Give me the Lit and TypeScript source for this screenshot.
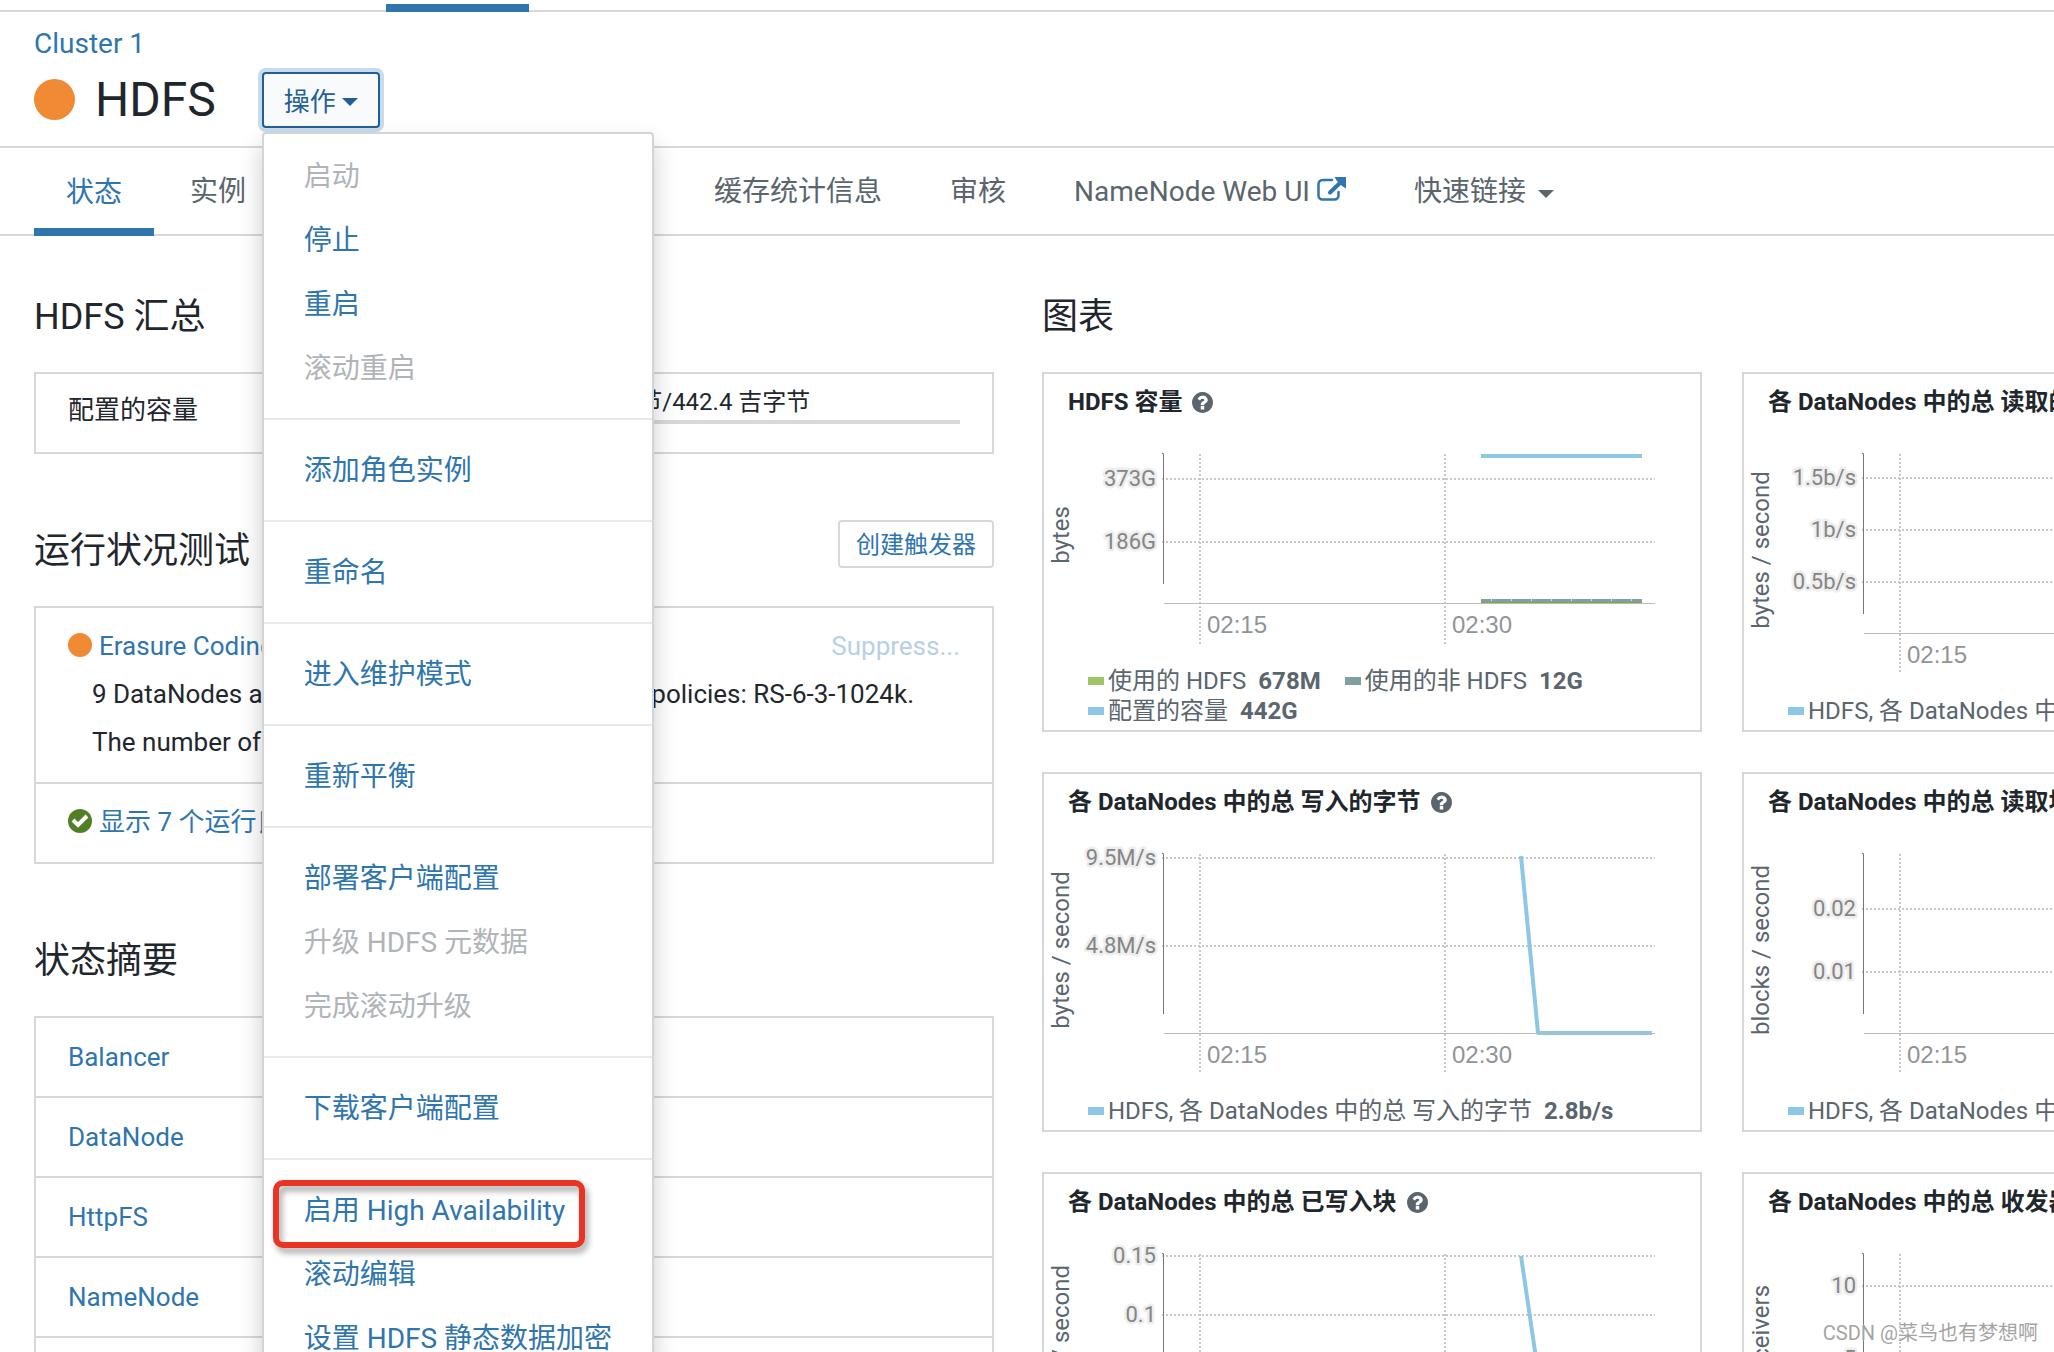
import { LitElement, html, svg, css, nothing } from "lit";
import { customElement, property } from "lit/decorators.js";
import { classMap } from "lit/directives/class-map.js";

interface Tick {
  y: number;
  label: string;
}

interface Legend {
  color: string;
  name: string;
  value?: string;
}

interface Series {
  color: string;
  points: string;
  width: number;
  dash?: string;
}

interface Chart {
  title: string;
  unit: string;
  rows: number;
  ticks: Tick[];
  series: Series[];
  legend: Legend[];
}

const BLUE = "#8cc8e6";

const CHARTS: Chart[] = [
  {
    title: "HDFS 容量",
    unit: "bytes",
    rows: 2,
    ticks: [
      { y: 51, label: "373G" },
      { y: 114, label: "186G" },
    ],
    series: [
      { color: BLUE, points: "437,28 598,28", width: 4 },
      { color: "#829fa0", points: "437,173 598,173", width: 4 },
      { color: "#d5e6e6", points: "447,172 598,172", width: 2, dash: "1 19" },
      { color: "#7ea64e", points: "437,175 598,175", width: 2 },
    ],
    legend: [
      { color: "#9fc367", name: "使用的 HDFS", value: "678M" },
      { color: "#829fa0", name: "使用的非 HDFS", value: "12G" },
      { color: BLUE, name: "配置的容量", value: "442G" },
    ],
  },
  {
    title: "各 DataNodes 中的总 读取的字节",
    unit: "bytes / second",
    rows: 1,
    ticks: [
      { y: 50, label: "1.5b/s" },
      { y: 102, label: "1b/s" },
      { y: 154, label: "0.5b/s" },
    ],
    series: [],
    legend: [{ color: BLUE, name: "HDFS, 各 DataNodes 中的总 读取的字节" }],
  },
  {
    title: "各 DataNodes 中的总 写入的字节",
    unit: "bytes / second",
    rows: 1,
    ticks: [
      { y: 30, label: "9.5M/s" },
      { y: 118, label: "4.8M/s" },
    ],
    series: [{ color: BLUE, points: "477,28 494,205 608,205", width: 4 }],
    legend: [{ color: BLUE, name: "HDFS, 各 DataNodes 中的总 写入的字节", value: "2.8b/s" }],
  },
  {
    title: "各 DataNodes 中的总 读取块",
    unit: "blocks / second",
    rows: 1,
    ticks: [
      { y: 81, label: "0.02" },
      { y: 144, label: "0.01" },
    ],
    series: [],
    legend: [{ color: BLUE, name: "HDFS, 各 DataNodes 中的总 读取块" }],
  },
  {
    title: "各 DataNodes 中的总 已写入块",
    unit: "blocks / second",
    rows: 1,
    ticks: [
      { y: 28, label: "0.15" },
      { y: 87, label: "0.1" },
      { y: 146, label: "0.05" },
    ],
    series: [{ color: BLUE, points: "477,28 503,205 608,205", width: 4 }],
    legend: [{ color: BLUE, name: "HDFS, 各 DataNodes 中的总 已写入块" }],
  },
  {
    title: "各 DataNodes 中的总 收发器",
    unit: "transceivers",
    rows: 1,
    ticks: [
      { y: 58, label: "10" },
      { y: 131, label: "5" },
    ],
    series: [],
    legend: [{ color: BLUE, name: "HDFS, 各 DataNodes 中的总 收发器" }],
  },
];

interface Action {
  label: string;
  disabled?: boolean;
  marked?: boolean;
}

const ACTIONS: Action[][] = [
  [
    { label: "启动", disabled: true },
    { label: "停止" },
    { label: "重启" },
    { label: "滚动重启", disabled: true },
  ],
  [{ label: "添加角色实例" }],
  [{ label: "重命名" }],
  [{ label: "进入维护模式" }],
  [{ label: "重新平衡" }],
  [
    { label: "部署客户端配置" },
    { label: "升级 HDFS 元数据", disabled: true },
    { label: "完成滚动升级", disabled: true },
  ],
  [{ label: "下载客户端配置" }],
  [
    { label: "启用 High Availability", marked: true },
    { label: "滚动编辑" },
    { label: "设置 HDFS 静态数据加密" },
  ],
];

const TABS = ["状态", "实例", "配置", "命令", "图表库", "缓存统计信息", "审核"];
const ROLES = ["Balancer", "DataNode", "HttpFS", "NameNode", "SecondaryNameNode"];

const helpIcon = html`<svg class="help" viewBox="128 128 1536 1536" aria-hidden="true">
  <path
    fill="currentColor"
    d="M1024 1376v-192q0-14-9-23t-23-9h-192q-14 0-23 9t-9 23v192q0 14 9 23t23 9h192q14 0 23-9t9-23zm256-672q0-88-55.500-163t-138.500-116-170-41q-243 0-371 213-15 24 8 42l132 100q7 6 19 6 16 0 25-12 53-68 86-92 34-24 86-24 48 0 85.500 26t37.500 59q0 38-20 61t-68 45q-63 28-115.500 86.500t-52.500 125.500v36q0 14 9 23t23 9h192q14 0 23-9t9-23q0-19 21.500-49.500t54.500-49.500q32-18 49-28.500t46-35 44.500-48 28-60.500 12.500-81zm384 192q0 209-103 385.500t-279.500 279.500-385.500 103-385.500-103-279.500-279.500-103-385.500 103-385.500 279.500-279.500 385.500-103 385.500 103 279.500 279.500 103 385.500z"
  />
</svg>`;

const fonts = css`
  :host {
    font-family: Roboto, "Noto Sans CJK SC", sans-serif;
  }
  * {
    box-sizing: border-box;
  }
`;

@customElement("metric-chart")
export class MetricChart extends LitElement {
  @property({ attribute: false }) chart!: Chart;

  static styles = [
    fonts,
    css`
      :host {
        display: flex;
        flex-direction: column;
        border: 2px solid #d6d8dc;
        background: #fff;
        padding-bottom: 4px;
      }
      .title {
        display: flex;
        align-items: center;
        gap: 10px;
        margin: 0;
        padding: 12px 24px 10px;
        font-size: 24px;
        line-height: 32px;
        font-weight: 700;
        color: #1f272d;
      }
      .help {
        width: 21px;
        height: 21px;
        color: #5a656d;
      }
      .plot {
        display: block;
        width: 100%;
        font-size: 24px;
      }
      .unit {
        fill: #5a656d;
        text-anchor: middle;
      }
      .tick {
        font-size: 22px;
        fill: #858585;
        text-anchor: end;
        paint-order: stroke;
        stroke: #eeeeee;
        stroke-width: 5px;
        stroke-linejoin: round;
      }
      .time {
        font-family: "Liberation Sans", sans-serif;
        fill: #909498;
      }
      .grid {
        stroke: #c8c8c8;
        stroke-width: 2;
        stroke-dasharray: 2 2;
      }
      .axis {
        stroke: #777;
      }
      .base {
        stroke: #bbb;
      }
      .legend {
        display: flex;
        flex-wrap: wrap;
        column-gap: 24px;
        margin: 0;
        padding: 0 24px 0 44px;
        list-style: none;
        font-size: 24px;
        line-height: 30px;
        color: #5a656d;
      }
      .entry {
        display: flex;
        align-items: center;
        white-space: nowrap;
      }
      .swatch {
        width: 16px;
        height: 8px;
        margin-right: 4px;
      }
      .value {
        margin-left: 12px;
      }
    `,
  ];

  render() {
    const c = this.chart;
    const drop = c.rows === 2 ? 30 : 0;
    const base = 205 - drop;
    const mid = c.rows === 2 ? 107 : 122;
    return html`
      <h3 class="title">${c.title} ${helpIcon}</h3>
      <svg class="plot" height=${268 - drop} role="img" aria-label=${c.title}>
        <text class="unit" transform="translate(25 ${mid}) rotate(-90)">${c.unit}</text>
        ${c.ticks.map(
          (t) => svg`
            <line class="grid" x1="118" x2="611" y1=${t.y} y2=${t.y} />
            <text class="tick" x="112" y=${t.y + 7}>${t.label}</text>`
        )}
        ${[
          [156, "02:15"],
          [401, "02:30"],
        ].map(
          ([x, label]) => svg`
            <line class="grid" x1=${x} x2=${x} y1="26" y2=${base + 41} />
            <text class="time" x=${Number(x) + 7} y=${base + 30}>${label}</text>`
        )}
        <path class="axis" fill="none" d="M118 25.500H119.500V${base - 19}" />
        ${c.series.map(
          (s) => svg`<polyline
            points=${s.points}
            fill="none"
            stroke=${s.color}
            stroke-width=${s.width}
            stroke-dasharray=${s.dash ?? "none"}
            stroke-linejoin="round" />`
        )}
        <path class="base" d="M120 ${base}.500H611" />
      </svg>
      <ul class="legend">
        ${c.legend.map(
          (l) => html`<li class="entry">
            <span class="swatch" style="background:${l.color}"></span>
            <span>${l.name}</span>
            ${l.value ? html`<b class="value">${l.value}</b>` : nothing}
          </li>`
        )}
      </ul>
    `;
  }
}

@customElement("action-menu")
export class ActionMenu extends LitElement {
  static styles = [
    fonts,
    css`
      :host {
        display: block;
        position: relative;
      }
      .trigger {
        display: flex;
        align-items: center;
        gap: 6px;
        height: 56px;
        padding: 0 20px 2px;
        border: 2px solid #1f5f99;
        border-radius: 4px;
        background: #f9fafc;
        box-shadow: 0 0 0 4px #c9dbea;
        color: #225f97;
        font: inherit;
        font-size: 26px;
      }
      .caret {
        width: 16px;
        height: 8px;
        margin-top: 6px;
      }
      .menu {
        position: absolute;
        z-index: 2;
        top: 60px;
        left: 0;
        padding: 10px 0;
        border: 2px solid #d2d4d6;
        border-radius: 4px;
        background: #fff;
        box-shadow: 0 12px 24px rgba(0, 0, 0, 0.2);
        font-size: 28px;
        line-height: 62px;
        white-space: nowrap;
      }
      .group {
        margin: 0;
        padding: 0;
        list-style: none;
      }
      .group + .group {
        margin-top: 18px;
        padding-top: 18px;
        border-top: 2px solid #e9eaeb;
      }
      .item {
        position: relative;
      }
      .action {
        display: block;
        padding: 2px 40px 0;
        color: #2f75ae;
        text-decoration: none;
      }
      .disabled {
        color: #b0b4b8;
      }
      .mark {
        position: absolute;
        top: 2px;
        left: 9px;
        width: 312px;
        height: 68px;
        border: 6px solid #ea3323;
        border-radius: 10px;
        filter: drop-shadow(3px 5px 3px rgba(0, 0, 0, 0.35));
        pointer-events: none;
      }
    `,
  ];

  render() {
    return html`
      <button class="trigger" aria-haspopup="menu" aria-expanded="true">
        操作
        <svg class="caret" viewBox="0 0 16 8" aria-hidden="true">
          <path fill="currentColor" d="M0 0h16L8 8z" />
        </svg>
      </button>
      <div class="menu">
        ${ACTIONS.map(
          (group) => html`<ul class="group">
            ${group.map(
              (a) => html`<li class="item">
                ${a.disabled
                  ? html`<a class="action disabled" aria-disabled="true">${a.label}</a>`
                  : html`<a class="action" href="#">${a.label}</a>`}
                ${a.marked ? html`<span class="mark"></span>` : nothing}
              </li>`
            )}
          </ul>`
        )}
      </div>
    `;
  }
}

@customElement("app-root")
export class AppRoot extends LitElement {
  static styles = [
    fonts,
    css`
      :host {
        display: block;
        position: relative;
        height: 100vh;
        overflow: hidden;
        background: #fff;
        color: #1f272d;
        font-size: 26px;
      }
      a {
        color: #2f75ae;
        text-decoration: none;
      }
      .strip {
        height: 12px;
        padding: 4px 0 0 386px;
        border-bottom: 2px solid #d6d8dc;
      }
      .current {
        width: 143px;
        height: 8px;
        background: #2f75ae;
      }
      .header {
        padding: 12px 34px 18px;
        border-bottom: 2px solid #d6d8dc;
      }
      .cluster {
        display: block;
        font-size: 28px;
        line-height: 40px;
      }
      .heading {
        display: flex;
        align-items: center;
        margin-top: 8px;
      }
      .status {
        width: 41px;
        height: 41px;
        margin: 0 20px 2px 0;
        border-radius: 50%;
        background: #f08a34;
      }
      .service {
        margin: 0 46px 0 0;
        font-size: 48px;
        line-height: 56px;
        font-weight: 400;
      }
      .tabs {
        display: flex;
        gap: 4px;
        padding: 0 34px;
        border-bottom: 2px solid #d6d8dc;
        font-size: 28px;
        line-height: 84px;
        white-space: nowrap;
      }
      .tab {
        display: flex;
        align-items: center;
        gap: 7px;
        padding: 2px 32px 0;
        color: #5a656d;
      }
      .active {
        margin-bottom: -2px;
        color: #2f75ae;
        box-shadow: inset 0 -8px #2f75ae;
      }
      .external {
        width: 29px;
        height: 24px;
        margin-bottom: 6px;
        color: #2f75ae;
      }
      .quick {
        gap: 12px;
        border: 0;
        background: none;
        font: inherit;
      }
      .caret {
        width: 16px;
        height: 8px;
        margin-top: 4px;
      }
      .body {
        display: grid;
        grid-template-columns: minmax(0, 960fr) minmax(0, 1012fr);
        column-gap: 48px;
        padding: 56px 0 0 34px;
      }
      .title {
        display: flex;
        align-items: center;
        justify-content: space-between;
        height: 48px;
        margin: 0;
        padding-top: 2px;
        font-size: 36px;
        line-height: 46px;
        font-weight: 400;
      }
      .box {
        margin: 32px 0 72px;
        border: 2px solid #d6d8dc;
      }
      .capacity {
        display: grid;
        grid-template-columns: 456px 1fr;
        align-items: start;
        height: 82px;
        padding: 12px 32px 0;
        line-height: 48px;
      }
      .usage {
        font-size: 24px;
        line-height: 32px;
      }
      .meter {
        height: 4px;
        margin-top: 2px;
        background: #d6d8dc;
      }
      .create {
        height: 48px;
        padding: 0 16px 2px;
        margin-bottom: 14px;
        border: 2px solid #d6d8dc;
        border-radius: 4px;
        background: #fff;
        color: #2f75ae;
        font: inherit;
        font-size: 24px;
      }
      .test {
        padding: 14px 32px 16px;
        line-height: 48px;
      }
      .test + .test {
        border-top: 2px solid #d6d8dc;
      }
      .line {
        display: flex;
        align-items: center;
        gap: 7px;
      }
      .grow {
        flex: 1;
      }
      .dot {
        width: 24px;
        height: 24px;
        margin-bottom: 2px;
      }
      .suppress {
        color: #b8d0e4;
      }
      .message {
        display: flex;
        justify-content: space-between;
        margin: 0;
        padding: 0 46px 0 24px;
        white-space: nowrap;
      }
      .roles {
        width: 100%;
        margin-top: 32px;
        border: 2px solid #d6d8dc;
        border-collapse: collapse;
      }
      .role {
        height: 80px;
        padding: 0 32px;
        border: solid #d6d8dc;
        border-width: 2px 0;
        text-align: left;
        font-weight: 400;
      }
      .charts {
        display: grid;
        grid-template-columns: repeat(2, 660px);
        gap: 40px;
        margin-top: 32px;
      }
      .credit {
        position: absolute;
        right: 16px;
        bottom: 4px;
        font-size: 20px;
        line-height: 30px;
        color: #a4a4a4;
        text-shadow: 0 0 2px #fff;
      }
    `,
  ];

  render() {
    return html`
      <div class="strip"><div class="current"></div></div>
      <header class="header">
        <a class="cluster" href="#">Cluster 1</a>
        <div class="heading">
          <span class="status"></span>
          <h1 class="service">HDFS</h1>
          <action-menu></action-menu>
        </div>
      </header>
      <nav class="tabs">
        ${TABS.map(
          (t, i) => html`<a class=${classMap({ tab: true, active: i === 0 })} href="#">${t}</a>`
        )}
        <a class="tab" href="#">
          NameNode Web UI
          <svg class="external" viewBox="0 0 29 24" aria-hidden="true">
            <path
              fill="none"
              stroke="currentColor"
              stroke-width="2.500"
              stroke-linecap="round"
              d="M15 3H5.500a4 4 0 0 0-4 4v11.500a4 4 0 0 0 4 4h12a4 4 0 0 0 4-4V15"
            />
            <path
              stroke="currentColor"
              stroke-width="4"
              stroke-linecap="round"
              d="M13 15.500L24 5"
            />
            <path fill="currentColor" d="M17.500 0H29v11.500l-4-2.500-5-5z" />
          </svg>
        </a>
        <button class="tab quick">
          快速链接
          <svg class="caret" viewBox="0 0 16 8" aria-hidden="true">
            <path fill="currentColor" d="M0 0h16L8 8z" />
          </svg>
        </button>
      </nav>
      <main class="body">
        <div>
          <h2 class="title">HDFS 汇总</h2>
          <section class="box capacity">
            <span>配置的容量</span>
            <div class="usage">
              677.9 兆字节/442.4 吉字节
              <div class="meter"></div>
            </div>
          </section>
          <h2 class="title">运行状况测试 <button class="create">创建触发器</button></h2>
          <section class="box">
            <div class="test">
              <div class="line">
                <svg class="dot" viewBox="0 0 24 24" aria-hidden="true">
                  <circle cx="12" cy="12" r="12" fill="#f08a34" />
                </svg>
                <a class="grow" href="#">Erasure Coding Policy</a>
                <a class="suppress" href="#">Suppress...</a>
              </div>
              <p class="message">
                <span>9 DataNodes are required for</span>
                <span>coding policies: RS-6-3-1024k.</span>
              </p>
              <p class="message"><span>The number of racks is 1.</span></p>
            </div>
            <div class="test">
              <div class="line">
                <svg class="dot" viewBox="0 0 24 24" aria-hidden="true">
                  <circle cx="12" cy="12" r="12" fill="#507f25" />
                  <path fill="none" stroke="#fff" stroke-width="4" d="M5 11l5 5 9-9" />
                </svg>
                <a href="#">显示 7 个运行良好</a>
              </div>
            </div>
          </section>
          <h2 class="title">状态摘要</h2>
          <table class="roles">
            <tbody>
              ${ROLES.map((r) => html`<tr><th class="role" scope="row"><a href="#">${r}</a></th></tr>`)}
            </tbody>
          </table>
        </div>
        <div>
          <h2 class="title">图表</h2>
          <div class="charts">
            ${CHARTS.map((c) => html`<metric-chart .chart=${c}></metric-chart>`)}
          </div>
        </div>
      </main>
      <div class="credit">CSDN @菜鸟也有梦想啊</div>
    `;
  }
}
